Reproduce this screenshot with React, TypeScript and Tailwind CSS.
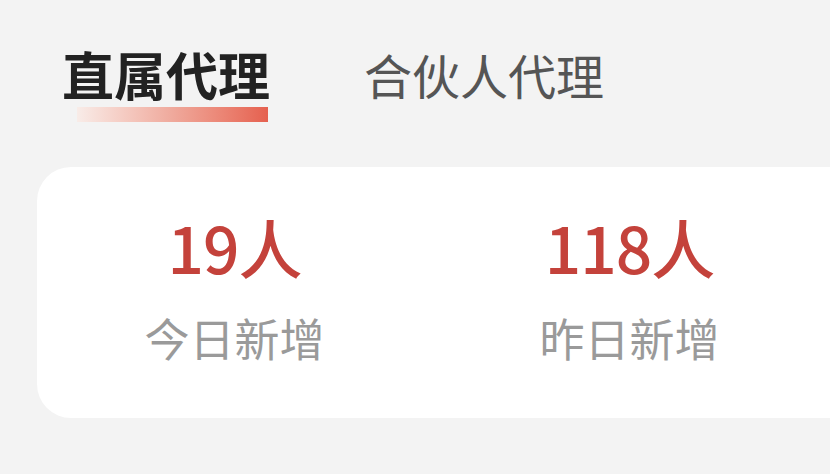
import React from 'react';

const stats = [
  { value: '19人', label: '今日新增' },
  { value: '118人', label: '昨日新增' },
];

export default function App() {
  return (
    <div
      className="w-[830px] h-[474px] overflow-hidden bg-[#f3f3f3]"
      style={{ fontFamily: '"Noto Sans CJK SC", "Noto Sans", sans-serif' }}
    >
      <div className="flex items-start pt-[38px] pl-[62px] gap-[94px]">
        <div className="flex flex-col">
          <span className="text-[52px] leading-[72px] font-bold text-[#222222]">直属代理</span>
          <div className="ml-[15px] mt-[-3px] h-[15px] w-[191px] bg-gradient-to-r from-[#f8ece8] via-[#efa99c] to-[#e5604f]" />
        </div>
        <span className="text-[48px] leading-[72px] text-[#555555]">合伙人代理</span>
      </div>

      <div className="mt-[45px] ml-[37px] w-[1200px] h-[251px] rounded-[34px] bg-white flex">
        {stats.map((s) => (
          <div key={s.label} className="w-[395px] flex flex-col items-center pt-[39px]">
            <span className="text-[64px] leading-[80px] font-medium text-[#c4423b] tracking-[-1px]">{s.value}</span>
            <span className="mt-[22px] text-[45px] leading-[60px] text-[#9a9a9a]">{s.label}</span>
          </div>
        ))}
      </div>
    </div>
  );
}
